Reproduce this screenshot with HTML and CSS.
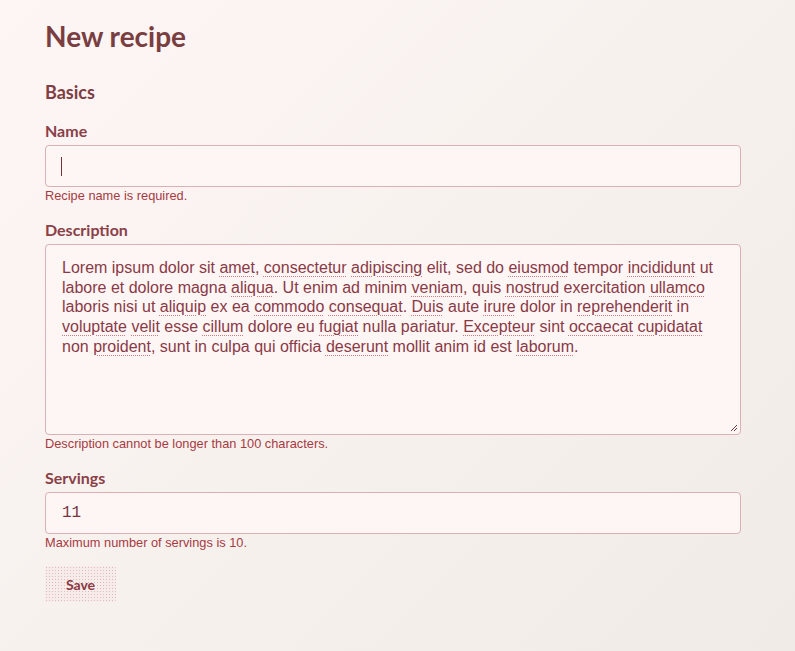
FILE: index.html
```html
<!DOCTYPE html>
<html lang="en">
<head>
<meta charset="utf-8">
<title>New recipe</title>
<link rel="stylesheet" href="styles.css">
</head>
<body>
<main class="page">
  <h1 class="title">New recipe</h1>
  <h2 class="section">Basics</h2>
  <form class="form">
    <div class="field">
      <label class="label" for="name">Name</label>
      <div class="control">
        <input class="input" id="name" type="text" value="">
        <span class="caret"></span>
      </div>
      <p class="error">Recipe name is required.</p>
    </div>
    <div class="field">
      <label class="label">Description</label>
      <div class="control">
        <div class="textarea" role="textbox" aria-multiline="true">Lorem ipsum dolor sit <span class="sp">amet</span>, <span class="sp">consectetur</span> <span class="sp">adipiscing</span> elit, sed do <span class="sp">eiusmod</span> tempor <span class="sp">incididunt</span> ut labore et dolore magna <span class="sp">aliqua</span>. Ut enim ad minim <span class="sp">veniam</span>, quis <span class="sp">nostrud</span> exercitation <span class="sp">ullamco</span> laboris nisi ut <span class="sp">aliquip</span> ex ea <span class="sp">commodo</span> <span class="sp">consequat</span>. <span class="sp">Duis</span> aute <span class="sp">irure</span> dolor in <span class="sp">reprehenderit</span> in <span class="sp">voluptate</span> <span class="sp">velit</span> esse <span class="sp">cillum</span> dolore eu <span class="sp">fugiat</span> nulla pariatur. <span class="sp">Excepteur</span> sint <span class="sp">occaecat</span> <span class="sp">cupidatat</span> non <span class="sp">proident</span>, sunt in culpa qui officia <span class="sp">deserunt</span> mollit anim id est <span class="sp">laborum</span>.</div>
        <svg class="grip" width="8" height="8" viewBox="0 0 8 8"><path d="M7 1 L1 7 M7 4 L4 7" stroke="#7a3a44" stroke-width="1"/></svg>
      </div>
      <p class="error">Description cannot be longer than 100 characters.</p>
    </div>
    <div class="field">
      <label class="label" for="servings">Servings</label>
      <div class="control">
        <input class="input mono" id="servings" type="text" value="11">
      </div>
      <p class="error">Maximum number of servings is 10.</p>
    </div>
    <button class="save" type="button">Save</button>
  </form>
</main>
</body>
</html>
```
FILE: styles.css
```css
html, body {
  margin: 0;
  padding: 0;
}
body {
  min-height: 651px;
  background: linear-gradient(135deg, #fdf6f5 0%, #f7f1ee 50%, #f0ebe6 100%);
  font-family: "Lato", "Liberation Sans", sans-serif;
  color: #8a4047;
}
.page {
  width: 696px;
  padding: 19px 0 0 45px;
}
.title {
  margin: 0;
  font-size: 28px;
  line-height: 34px;
  font-weight: 700;
  color: #7a3d40;
}
.section {
  margin: 29px 0 0;
  font-size: 18px;
  line-height: 20px;
  font-weight: 700;
  color: #7f3e43;
}
.form {
  display: flex;
  flex-direction: column;
  margin-top: 20px;
}
.field {
  display: flex;
  flex-direction: column;
  margin-bottom: 17px;
}
.label {
  font-size: 16px;
  line-height: 18px;
  font-weight: 700;
  color: #8a4047;
  margin-bottom: 5px;
}
.control {
  position: relative;
}
.input {
  display: block;
  box-sizing: border-box;
  width: 100%;
  height: 42px;
  margin: 0;
  padding: 0 16px;
  border: 1px solid #d9b0b3;
  border-radius: 4px;
  background: #fdf6f5;
  color: #8a3a44;
  font-family: "Liberation Sans", sans-serif;
  font-size: 16px;
  outline: none;
}
.mono {
  font-family: "Liberation Mono", "DejaVu Sans Mono", monospace;
  font-size: 16px;
  color: #7a3440;
}
.caret {
  position: absolute;
  left: 16px;
  top: 12px;
  width: 1px;
  height: 19px;
  background: #7a2f3a;
}
.textarea {
  box-sizing: border-box;
  width: 100%;
  height: 191px;
  padding: 13px 16px 12px;
  border: 1px solid #d9b0b3;
  border-radius: 4px;
  background: #fdf6f5;
  color: #8a3a46;
  font-family: "Liberation Sans", sans-serif;
  font-size: 16px;
  line-height: 19.7px;
}
.sp {
  text-decoration: underline dotted #d27a84;
  text-decoration-thickness: 1px;
  text-underline-offset: 3px;
}
.grip {
  position: absolute;
  right: 3px;
  bottom: 3px;
}
.error {
  margin: 1px 0 0;
  font-family: "Liberation Sans", sans-serif;
  font-size: 12.8px;
  line-height: 16px;
  color: #a83a42;
}
.save {
  align-self: flex-start;
  width: 71px;
  height: 36px;
  margin-top: -2px;
  padding: 0;
  border: none;
  border-radius: 3px;
  background-color: #f6ecea;
  background-image: radial-gradient(circle, #e3b9bd 0.7px, transparent 0.9px);
  background-size: 3px 3px;
  font-family: "Lato", sans-serif;
  font-size: 14px;
  font-weight: 700;
  color: #8a3a44;
}
```
